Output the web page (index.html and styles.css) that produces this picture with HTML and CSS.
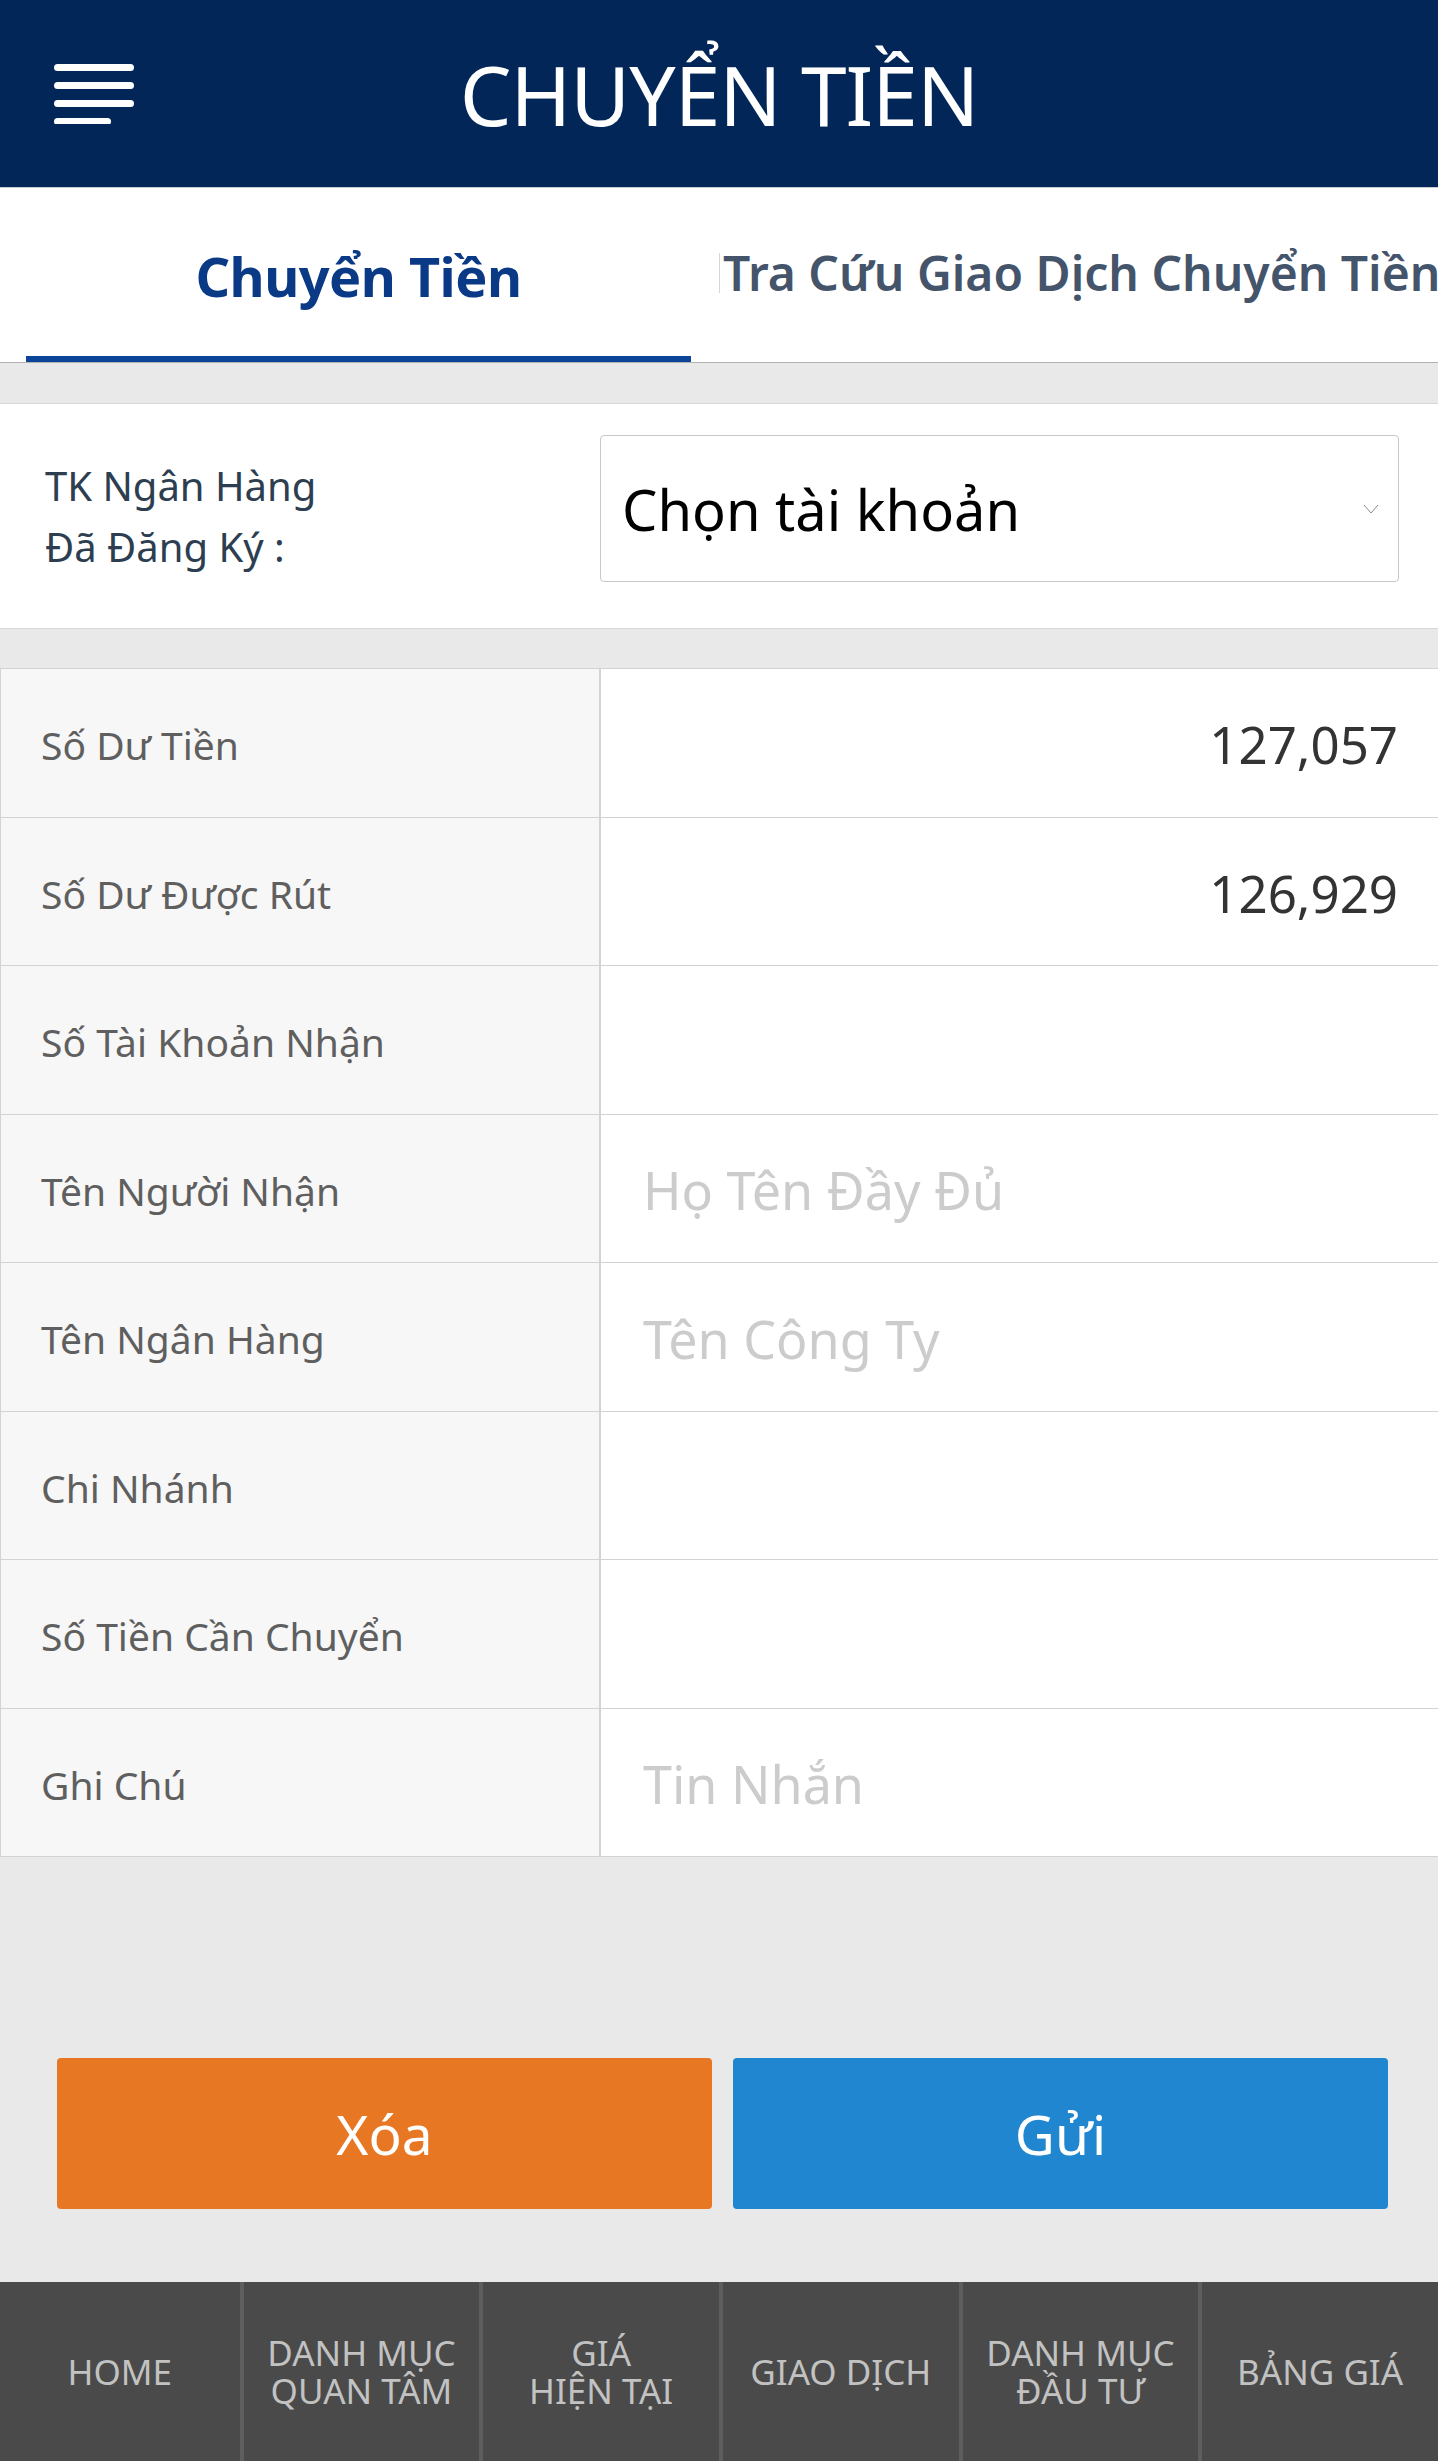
FILE: index.html
```html
<!DOCTYPE html>
<html lang="vi">
<head>
<meta charset="utf-8">
<title>Chuyển Tiền</title>
<link rel="stylesheet" href="styles.css">
</head>
<body>
<header class="topbar">
  <button class="menu-btn" type="button" aria-label="Menu">
    <svg width="80" height="60" viewBox="0 0 80 60">
      <g stroke="#ffffff" stroke-width="7" stroke-linecap="round">
        <line x1="3.5" y1="3.5" x2="76.5" y2="3.5"/>
        <line x1="3.5" y1="21.5" x2="76.5" y2="21.5"/>
        <line x1="3.5" y1="39.5" x2="76.5" y2="39.5"/>
        <line x1="3.5" y1="57.5" x2="53.5" y2="57.5"/>
      </g>
    </svg>
  </button>
  <h1 class="title">CHUYỂN TIỀN</h1>
  <span class="topbar-spacer"></span>
</header>

<nav class="tabs">
  <a class="tab tab-active">Chuyển Tiền</a>
  <a class="tab tab-other"><span class="tab-label">Tra Cứu Giao Dịch Chuyển Tiền</span></a>
</nav>

<div class="gap gap-top"></div>

<section class="account-row">
  <div class="account-label">TK Ngân Hàng<br>Đã Đăng Ký :</div>
  <div class="select-box">
    <span>Chọn tài khoản</span>
    <svg class="chevron" width="16" height="10" viewBox="0 0 16 10">
      <polyline points="1,1 8,9 15,1" fill="none" stroke="#8a8a8a" stroke-width="1"/>
    </svg>
  </div>
</section>

<div class="gap gap-mid"></div>

<section class="form-grid">
  <div class="cell-label">Số Dư Tiền</div>
  <div class="cell-value value-num">127,057</div>
  <div class="cell-label">Số Dư Được Rút</div>
  <div class="cell-value value-num">126,929</div>
  <div class="cell-label">Số Tài Khoản Nhận</div>
  <div class="cell-value"></div>
  <div class="cell-label">Tên Người Nhận</div>
  <div class="cell-value placeholder">Họ Tên Đầy Đủ</div>
  <div class="cell-label">Tên Ngân Hàng</div>
  <div class="cell-value placeholder">Tên Công Ty</div>
  <div class="cell-label">Chi Nhánh</div>
  <div class="cell-value"></div>
  <div class="cell-label">Số Tiền Cần Chuyển</div>
  <div class="cell-value"></div>
  <div class="cell-label">Ghi Chú</div>
  <div class="cell-value placeholder">Tin Nhắn</div>
</section>

<div class="actions">
  <button class="btn btn-clear" type="button">Xóa</button>
  <button class="btn btn-send" type="button">Gửi</button>
</div>

<footer class="bottom-nav">
  <a class="nav-item"><span class="nav-line">HOME</span></a>
  <a class="nav-item"><span class="nav-line">DANH MỤC</span><span class="nav-line">QUAN TÂM</span></a>
  <a class="nav-item"><span class="nav-line">GIÁ</span><span class="nav-line">HIỆN TẠI</span></a>
  <a class="nav-item"><span class="nav-line">GIAO DỊCH</span></a>
  <a class="nav-item"><span class="nav-line">DANH MỤC</span><span class="nav-line">ĐẦU TƯ</span></a>
  <a class="nav-item"><span class="nav-line">BẢNG GIÁ</span></a>
</footer>
</body>
</html>
```

FILE: styles.css
```css
* {
  box-sizing: border-box;
}

html, body {
  margin: 0;
  padding: 0;
}

body {
  width: 1438px;
  overflow-x: hidden;
  background: #e9e9e9;
  font-family: "Noto Sans", "Open Sans", "DejaVu Sans", sans-serif;
  color: #333333;
}

/* Header */
.topbar {
  display: grid;
  grid-template-columns: 1fr auto 1fr;
  align-items: center;
  height: 188px;
  background: #032659;
  border-bottom: 1px solid #c9ccd2;
}

.menu-btn {
  justify-self: start;
  margin-left: 54px;
  padding: 0;
  border: 0;
  background: transparent;
  width: 80px;
  height: 60px;
  display: flex;
}

.title {
  margin: 0;
  font-size: 82px;
  font-weight: 400;
  line-height: 1;
  letter-spacing: -1px;
  color: #ffffff;
}

/* Tabs */
.tabs {
  display: flex;
  align-items: center;
  height: 175px;
  background: #ffffff;
  border-bottom: 1px solid #b3b3b3;
  overflow: hidden;
  white-space: nowrap;
}

.tab {
  display: flex;
  align-items: center;
  text-decoration: none;
}

.tab-active {
  flex: 0 0 665px;
  margin-left: 26px;
  height: 174px;
  padding-top: 2px;
  justify-content: center;
  font-size: 54px;
  font-weight: 700;
  letter-spacing: -0.5px;
  line-height: 1;
  color: #0a3a86;
  box-shadow: inset 0 -6px 0 #0c4597;
}

.tab-other {
  flex: 0 0 auto;
  margin-left: 28px;
  padding-bottom: 4px;
  font-size: 48px;
  font-weight: 600;
  color: #44546b;
}

.tab-label {
  display: inline-block;
  line-height: 40px;
  padding-left: 3px;
  border-left: 1px solid #d6d6d6;
}

/* Gaps */
.gap {
  background: #e9e9e9;
  border-bottom: 1px solid #d8d8d8;
}

.gap-top {
  height: 41px;
}

.gap-mid {
  height: 40px;
  border-bottom: 1px solid #d3d3d3;
}

/* Account row */
.account-row {
  display: flex;
  align-items: center;
  height: 225px;
  padding: 0 39px 0 45px;
  background: #ffffff;
  border-bottom: 1px solid #d8d8d8;
}

.account-label {
  flex: 0 0 555px;
  font-size: 40px;
  line-height: 61px;
  color: #2c3e50;
}

.select-box {
  flex: 1 1 auto;
  height: 147px;
  margin-bottom: 15px;
  padding: 0 19px 0 21px;
  display: flex;
  align-items: center;
  justify-content: space-between;
  border: 1px solid #c8c8c8;
  border-radius: 4px;
  font-size: 56px;
  line-height: 1;
  color: #000000;
}

/* Form grid */
.form-grid {
  display: grid;
  grid-template-columns: 600px 1fr;
}

.cell-label,
.cell-value {
  height: 148.5px;
  display: flex;
  align-items: center;
  padding-top: 4px;
  border-bottom: 1px solid #d3d3d3;
  line-height: 1;
}

.cell-label {
  padding-left: 40px;
  background: #f7f7f7;
  border-left: 1px solid #d3d3d3;
  border-right: 1px solid #d3d3d3;
  font-size: 39px;
  color: #5f5f5f;
}

.cell-value {
  padding-left: 42px;
  padding-right: 40px;
  background: #ffffff;
  border-left: 1px solid #d3d3d3;
  font-size: 51px;
  color: #333333;
}

.value-num {
  justify-content: flex-end;
}

.placeholder {
  font-size: 52px;
  color: #cccccc;
}

/* Buttons */
.actions {
  display: flex;
  gap: 21px;
  padding: 201px 50px 73px 57px;
}

.btn {
  flex: 1 1 0;
  height: 151px;
  border: 0;
  border-radius: 4px;
  font-family: inherit;
  font-size: 55px;
  line-height: 1;
  color: #ffffff;
}

.btn-clear {
  background: #e87724;
}

.btn-send {
  background: #2086cf;
}

/* Bottom navigation */
.bottom-nav {
  display: flex;
  height: 179px;
  background: #4a4a4a;
}

.nav-item {
  flex: 0 0 calc(100% / 6);
  display: flex;
  flex-direction: column;
  align-items: center;
  justify-content: center;
  text-align: center;
  font-size: 35px;
  color: #c2c2c2;
}

.nav-line {
  display: block;
  height: 38px;
  line-height: 38px;
  white-space: nowrap;
}

.nav-item + .nav-item {
  border-left: 4px solid #5e5e5e;
}
```
